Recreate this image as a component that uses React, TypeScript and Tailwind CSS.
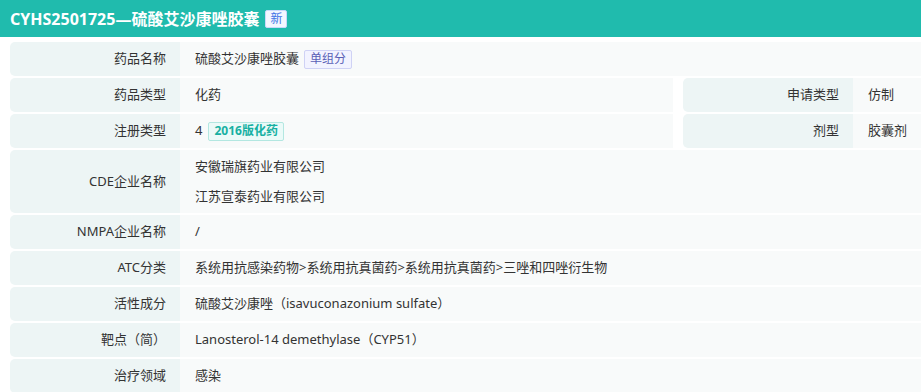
import React from "react";

const font = { fontFamily: '"Noto Sans", "Noto Sans CJK SC", sans-serif' };

const Label = ({ children, tall }: { children: React.ReactNode; tall?: boolean }) => (
  <div
    className={`w-[170px] shrink-0 rounded-l-[5px] bg-[#edf5f5] flex items-center justify-end pr-[14px] text-[13px] text-[#333] ${
      tall ? "h-[63px]" : "h-[34px]"
    }`}
  >
    {children}
  </div>
);

const Value = ({ children, className = "" }: { children: React.ReactNode; className?: string }) => (
  <div className={`bg-[#f8fafa] flex items-center pl-[15px] text-[13px] text-[#333] ${className}`}>{children}</div>
);

const Row = ({ label, children }: { label: string; children: React.ReactNode }) => (
  <div className="flex">
    <Label>{label}</Label>
    <Value className="flex-1 h-[34px]">{children}</Value>
  </div>
);

export default function App() {
  return (
    <div className="w-[921px] h-[392px] overflow-hidden bg-white" style={font}>
      <div className="h-[37px] bg-[#20bbad] flex items-center pl-[10px] gap-[6px]">
        <span className="text-white font-bold text-[16px]">CYHS2501725—硫酸艾沙康唑胶囊</span>
        <span className="h-[18px] px-[4px] flex items-center rounded-[2px] bg-[#f3f7ff] border border-[#c9d8fb] text-[#3f73e6] text-[12px]">
          新
        </span>
      </div>
      <div className="pt-[5px] pl-[10px] flex flex-col gap-[2px]">
        <Row label="药品名称">
          <span>硫酸艾沙康唑胶囊</span>
          <span className="ml-[5px] h-[19px] px-[5px] flex items-center rounded-[2px] bg-[#f2f3ff] border border-[#cfd2f5] text-[#5a5fb6] text-[12px]">
            单组分
          </span>
        </Row>
        <div className="flex">
          <Label>药品类型</Label>
          <Value className="w-[493px] h-[34px]">化药</Value>
          <div className="w-[10px] shrink-0" />
          <Label>申请类型</Label>
          <Value className="flex-1 h-[34px]">仿制</Value>
        </div>
        <div className="flex">
          <Label>注册类型</Label>
          <Value className="w-[493px] h-[34px]">
            <span>4</span>
            <span className="ml-[6px] h-[19px] px-[5px] flex items-center rounded-[2px] bg-[#ebfaf8] border border-[#b3e7e1] text-[#16b0a2] text-[12px] font-bold">
              2016版化药
            </span>
          </Value>
          <div className="w-[10px] shrink-0" />
          <Label>剂型</Label>
          <Value className="flex-1 h-[34px]">胶囊剂</Value>
        </div>
        <div className="flex">
          <Label tall>CDE企业名称</Label>
          <div className="flex-1 h-[63px] bg-[#f8fafa] flex flex-col justify-center gap-[10px] pl-[15px] text-[13px] text-[#333]">
            <div>安徽瑞旗药业有限公司</div>
            <div>江苏宣泰药业有限公司</div>
          </div>
        </div>
        <Row label="NMPA企业名称">/</Row>
        <Row label="ATC分类">系统用抗感染药物&gt;系统用抗真菌药&gt;系统用抗真菌药&gt;三唑和四唑衍生物</Row>
        <Row label="活性成分">硫酸艾沙康唑（isavuconazonium sulfate）</Row>
        <Row label="靶点（简）">Lanosterol-14 demethylase（CYP51）</Row>
        <Row label="治疗领域">感染</Row>
      </div>
    </div>
  );
}
